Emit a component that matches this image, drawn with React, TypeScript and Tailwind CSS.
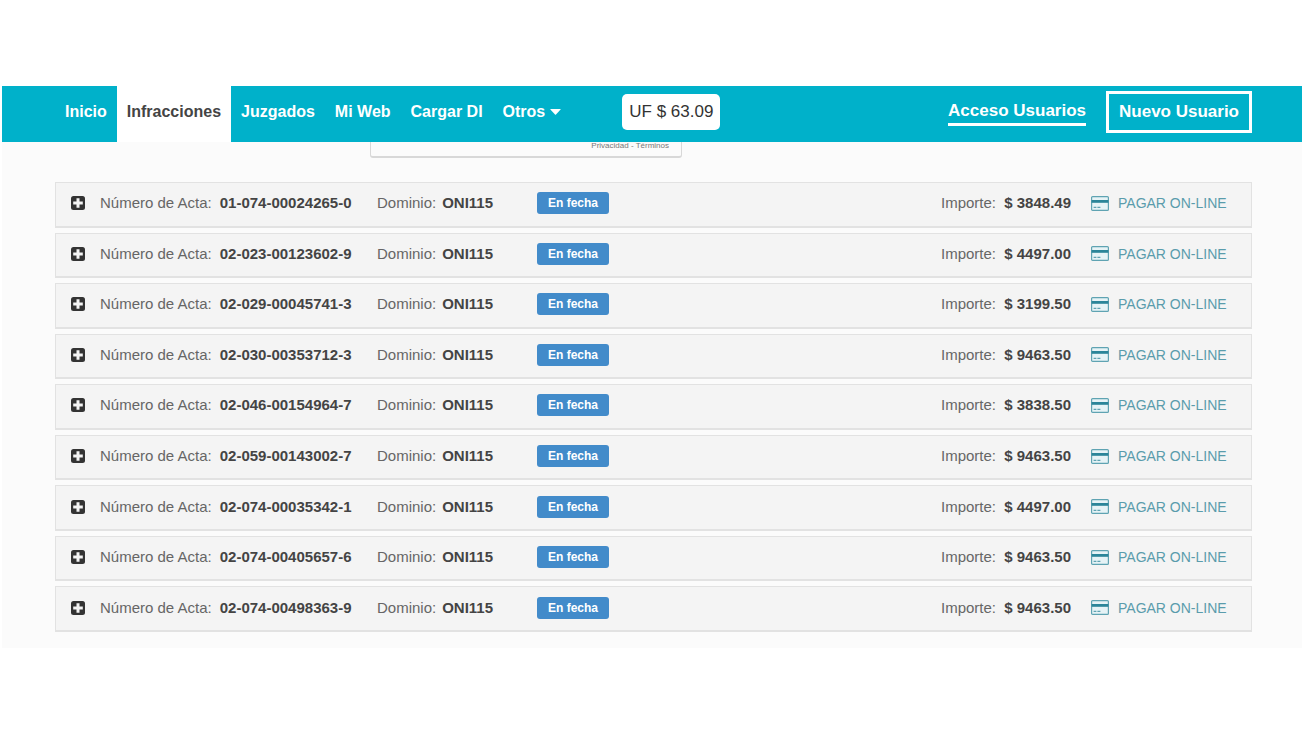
const navItems = ["Juzgados", "Mi Web", "Cargar DI"];

const actas = [
  { numero: "01-074-00024265-0", dominio: "ONI115", importe: "3848.49" },
  { numero: "02-023-00123602-9", dominio: "ONI115", importe: "4497.00" },
  { numero: "02-029-00045741-3", dominio: "ONI115", importe: "3199.50" },
  { numero: "02-030-00353712-3", dominio: "ONI115", importe: "9463.50" },
  { numero: "02-046-00154964-7", dominio: "ONI115", importe: "3838.50" },
  { numero: "02-059-00143002-7", dominio: "ONI115", importe: "9463.50" },
  { numero: "02-074-00035342-1", dominio: "ONI115", importe: "4497.00" },
  { numero: "02-074-00405657-6", dominio: "ONI115", importe: "9463.50" },
  { numero: "02-074-00498363-9", dominio: "ONI115", importe: "9463.50" },
];

function PlusIcon() {
  return (
    <svg width="14" height="14" viewBox="0 0 14 14" aria-hidden="true">
      <rect width="14" height="14" rx="2.5" fill="#333" />
      <path d="M7 2.2v9.6M2.2 7h9.6" stroke="#f4f4f4" strokeWidth="3" />
    </svg>
  );
}

function CardIcon() {
  return (
    <svg width="18" height="15" viewBox="0 0 18 15" fill="none" aria-hidden="true">
      <rect x="0.6" y="0.6" width="16.8" height="13.8" rx="1" fill="#e6f3f6" stroke="#5fa3b2" strokeWidth="1.2" />
      <path d="M0.6 5.4h16.8" stroke="#2b8599" strokeWidth="2.8" />
      <path d="M2.6 11.4h2.8M6.4 11.4h3" stroke="#5fa3b2" strokeWidth="1.1" />
    </svg>
  );
}

function Header() {
  return (
    <header className="relative z-10 flex h-14 items-stretch justify-between bg-[#00b1ca] pr-[50px] pl-[53px] text-base font-bold text-white">
      <div className="flex items-center">
        <nav className="flex h-full">
          <a href="#inicio" className="flex items-center px-2.5 pb-1">
            Inicio
          </a>
          <a href="#infracciones" className="flex items-center bg-white px-2.5 pb-1 text-[#444]">
            Infracciones
          </a>
          {navItems.map((item) => (
            <a key={item} href="#nav" className="flex items-center px-2.5 pb-1">
              {item}
            </a>
          ))}
          <button type="button" className="flex items-center gap-[5px] px-2.5 pb-1">
            Otros
            <svg width="11" height="6" viewBox="0 0 11 6" fill="currentColor" aria-hidden="true">
              <path d="M0.8 0h9.4q0.8 0 0.4 0.6L6 5.6q-0.5 0.5-1 0L0.4 0.6Q0 0 0.8 0z" />
            </svg>
          </button>
        </nav>
        <span className="mb-1 ml-[51px] rounded-[5px] bg-white px-[7px] py-1.5 text-[17px] leading-6 font-normal text-[#333]">
          UF $ 63.09
        </span>
      </div>
      <div className="flex items-center gap-5 pb-1 text-[17px] leading-6">
        <a href="#acceso" className="border-b-3 border-white">
          Acceso Usuarios
        </a>
        <a href="#nuevo" className="border-3 border-white px-2.5 py-1.5">
          Nuevo Usuario
        </a>
      </div>
    </header>
  );
}

function ActaRow({ numero, dominio, importe }: { numero: string; dominio: string; importe: string }) {
  return (
    <li className="flex items-center border border-b-2 border-[#e2e2e2] bg-[#f4f4f4] pr-[21px] pb-0.5 pl-[15px] text-[15px] leading-5 text-[#666]">
      <button type="button" aria-label="Ver detalle" className="mr-[15px]">
        <PlusIcon />
      </button>
      <p className="flex w-[277px] gap-2">
        Número de Acta: <b className="text-[#444]">{numero}</b>
      </p>
      <p className="flex w-40 gap-[6px]">
        Dominio: <b className="text-[#444]">{dominio}</b>
      </p>
      <span className="rounded-[3px] bg-[#428bca] px-[11px] text-xs leading-[22px] font-bold text-white">En fecha</span>
      <p className="ml-auto flex w-[130px] justify-between">
        Importe: <b className="text-[#444]">$ {importe}</b>
      </p>
      <a href="#pagar" className="ml-5 flex items-center gap-[9px] text-sm text-[#5a9cac]">
        <CardIcon />
        <span className="w-28">PAGAR ON-LINE</span>
      </a>
    </li>
  );
}

export default function App() {
  return (
    <div className="min-h-screen bg-white pt-[86px] pl-0.5 font-['Liberation_Sans',Arial,sans-serif]">
      <Header />
      <main className="bg-[#fbfbfb] pr-[50px] pb-4 pl-[53px]">
        {/* bottom edge of the captcha, mostly scrolled under the header */}
        <div className="-mt-2 ml-[315px] w-[312px] rounded-b-[3px] border border-b-2 border-[#d8d8d8] px-3 pt-[6px] pb-[5px] text-right text-[8px] leading-[10px] text-[#777]">
          <a href="#privacidad">Privacidad</a> - <a href="#terminos">Términos</a>
        </div>
        <ul className="mt-6 grid min-h-[450px] auto-rows-fr gap-[5px]">
          {actas.map((acta) => (
            <ActaRow key={acta.numero} {...acta} />
          ))}
        </ul>
      </main>
    </div>
  );
}
